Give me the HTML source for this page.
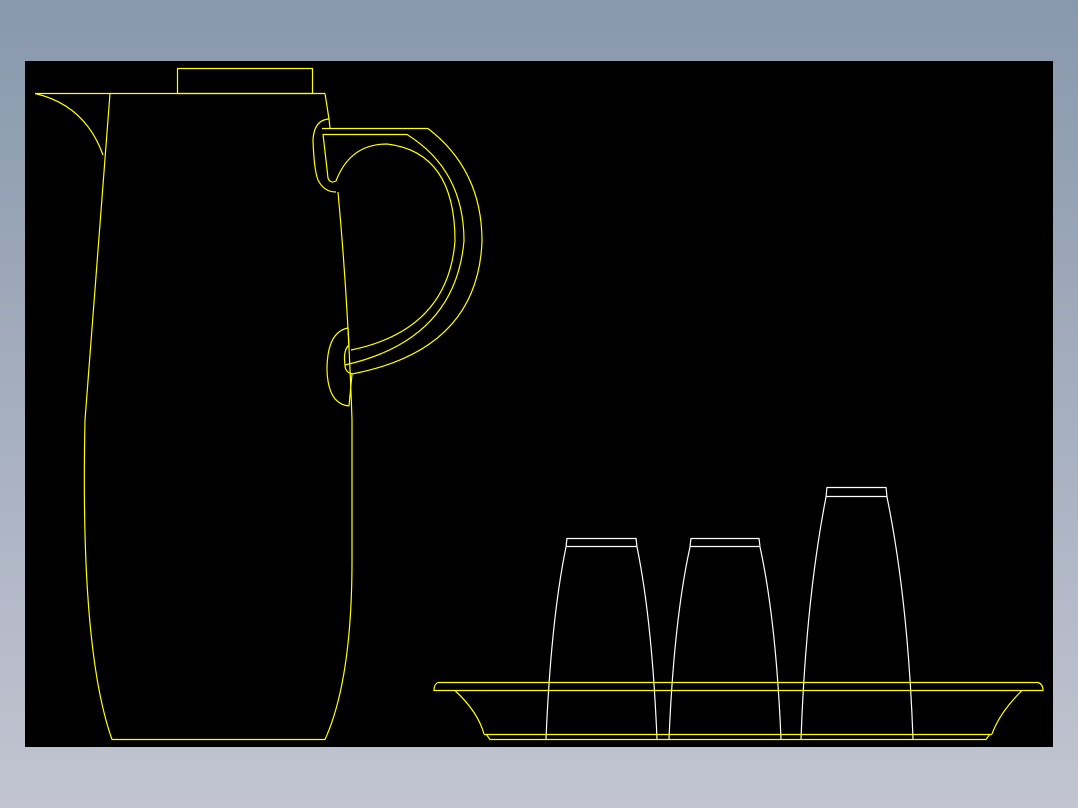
<!DOCTYPE html>
<html><head><style>
html,body{margin:0;padding:0;width:1078px;height:808px;overflow:hidden;background:linear-gradient(#8898ad,#c2c5d1);}
svg{position:absolute;left:0;top:0}
</style></head><body>
<svg width="1078" height="808" viewBox="0 0 1078 808">
<rect x="25" y="61" width="1028" height="686" fill="#000"/>
<g fill="none" stroke="#ffff00" stroke-width="1.2">
<rect x="177.5" y="68.5" width="135" height="25"/>
<line x1="35" y1="93.5" x2="325" y2="93.5"/>
<path d="M35 93.5 Q85 105 103 155"/>
<path d="M110 93.5 L85 420 Q80 650 112 739.5 L325 739.5 Q352 680 352 560 L352 420 Q348 300 338 192"/>
<path d="M325 93.5 L329 119"/>
<path d="M329 119 Q314 120 313 140 Q314 170 318 180 Q324 192 336 192"/>
<path d="M329 119 L330 128"/>
<path d="M322 128.5 L428 128.5 Q482 170 482 241 Q478 350 352 374"/>
<path d="M323 134.5 L407 134.5 Q464 170 464 241 Q455 340 345 365"/>
<path d="M323 134 L328 178 Q330 184 336 181 Q350 144 387 144 Q455 152 455 241 Q448 330 351 350"/>
<path d="M348 328 Q327 332 327 370 Q328 404 349 406"/>
<path d="M348 328 L349 345 Q343 350 345 365 Q345 372 352 374 L349 406"/>
</g>
<g fill="none" stroke="#ffffff" stroke-width="1.2">
<path d="M567 538.5 L636 538.5 M566 546.5 L637 546.5 M567 538 L566 547 M636 538 L637 547"/>
<path d="M566 547 Q551 620 546 739 M637 547 Q652 620 657 739"/>
<path d="M691 538.5 L759 538.5 M690 546.5 L760 546.5 M691 538 L690 547 M759 538 L760 547"/>
<path d="M690 547 Q674 620 669 739 M760 547 Q776 620 781 739"/>
<path d="M827 487.5 L886 487.5 M826 496.5 L887 496.5 M827 487 L826 497 M886 487 L887 497"/>
<path d="M826 497 Q806 600 801 739 M887 497 Q908 600 913 739"/>
</g>
<g fill="none" stroke="#ffff00" stroke-width="1.2">
<path d="M438 682.5 L1038 682.5 Q1043 684 1043 690.5 L434 690.5 Q434 684 438 682.5"/>
<path d="M455 690.5 Q478 712 484 734"/>
<path d="M1022 690.5 Q1000 712 992 734"/>
<path d="M484 734.5 L992 734.5"/>
<path d="M486 734 L490 739.5 L986 739.5 L990 734"/>
</g>
</svg>
</body></html>
